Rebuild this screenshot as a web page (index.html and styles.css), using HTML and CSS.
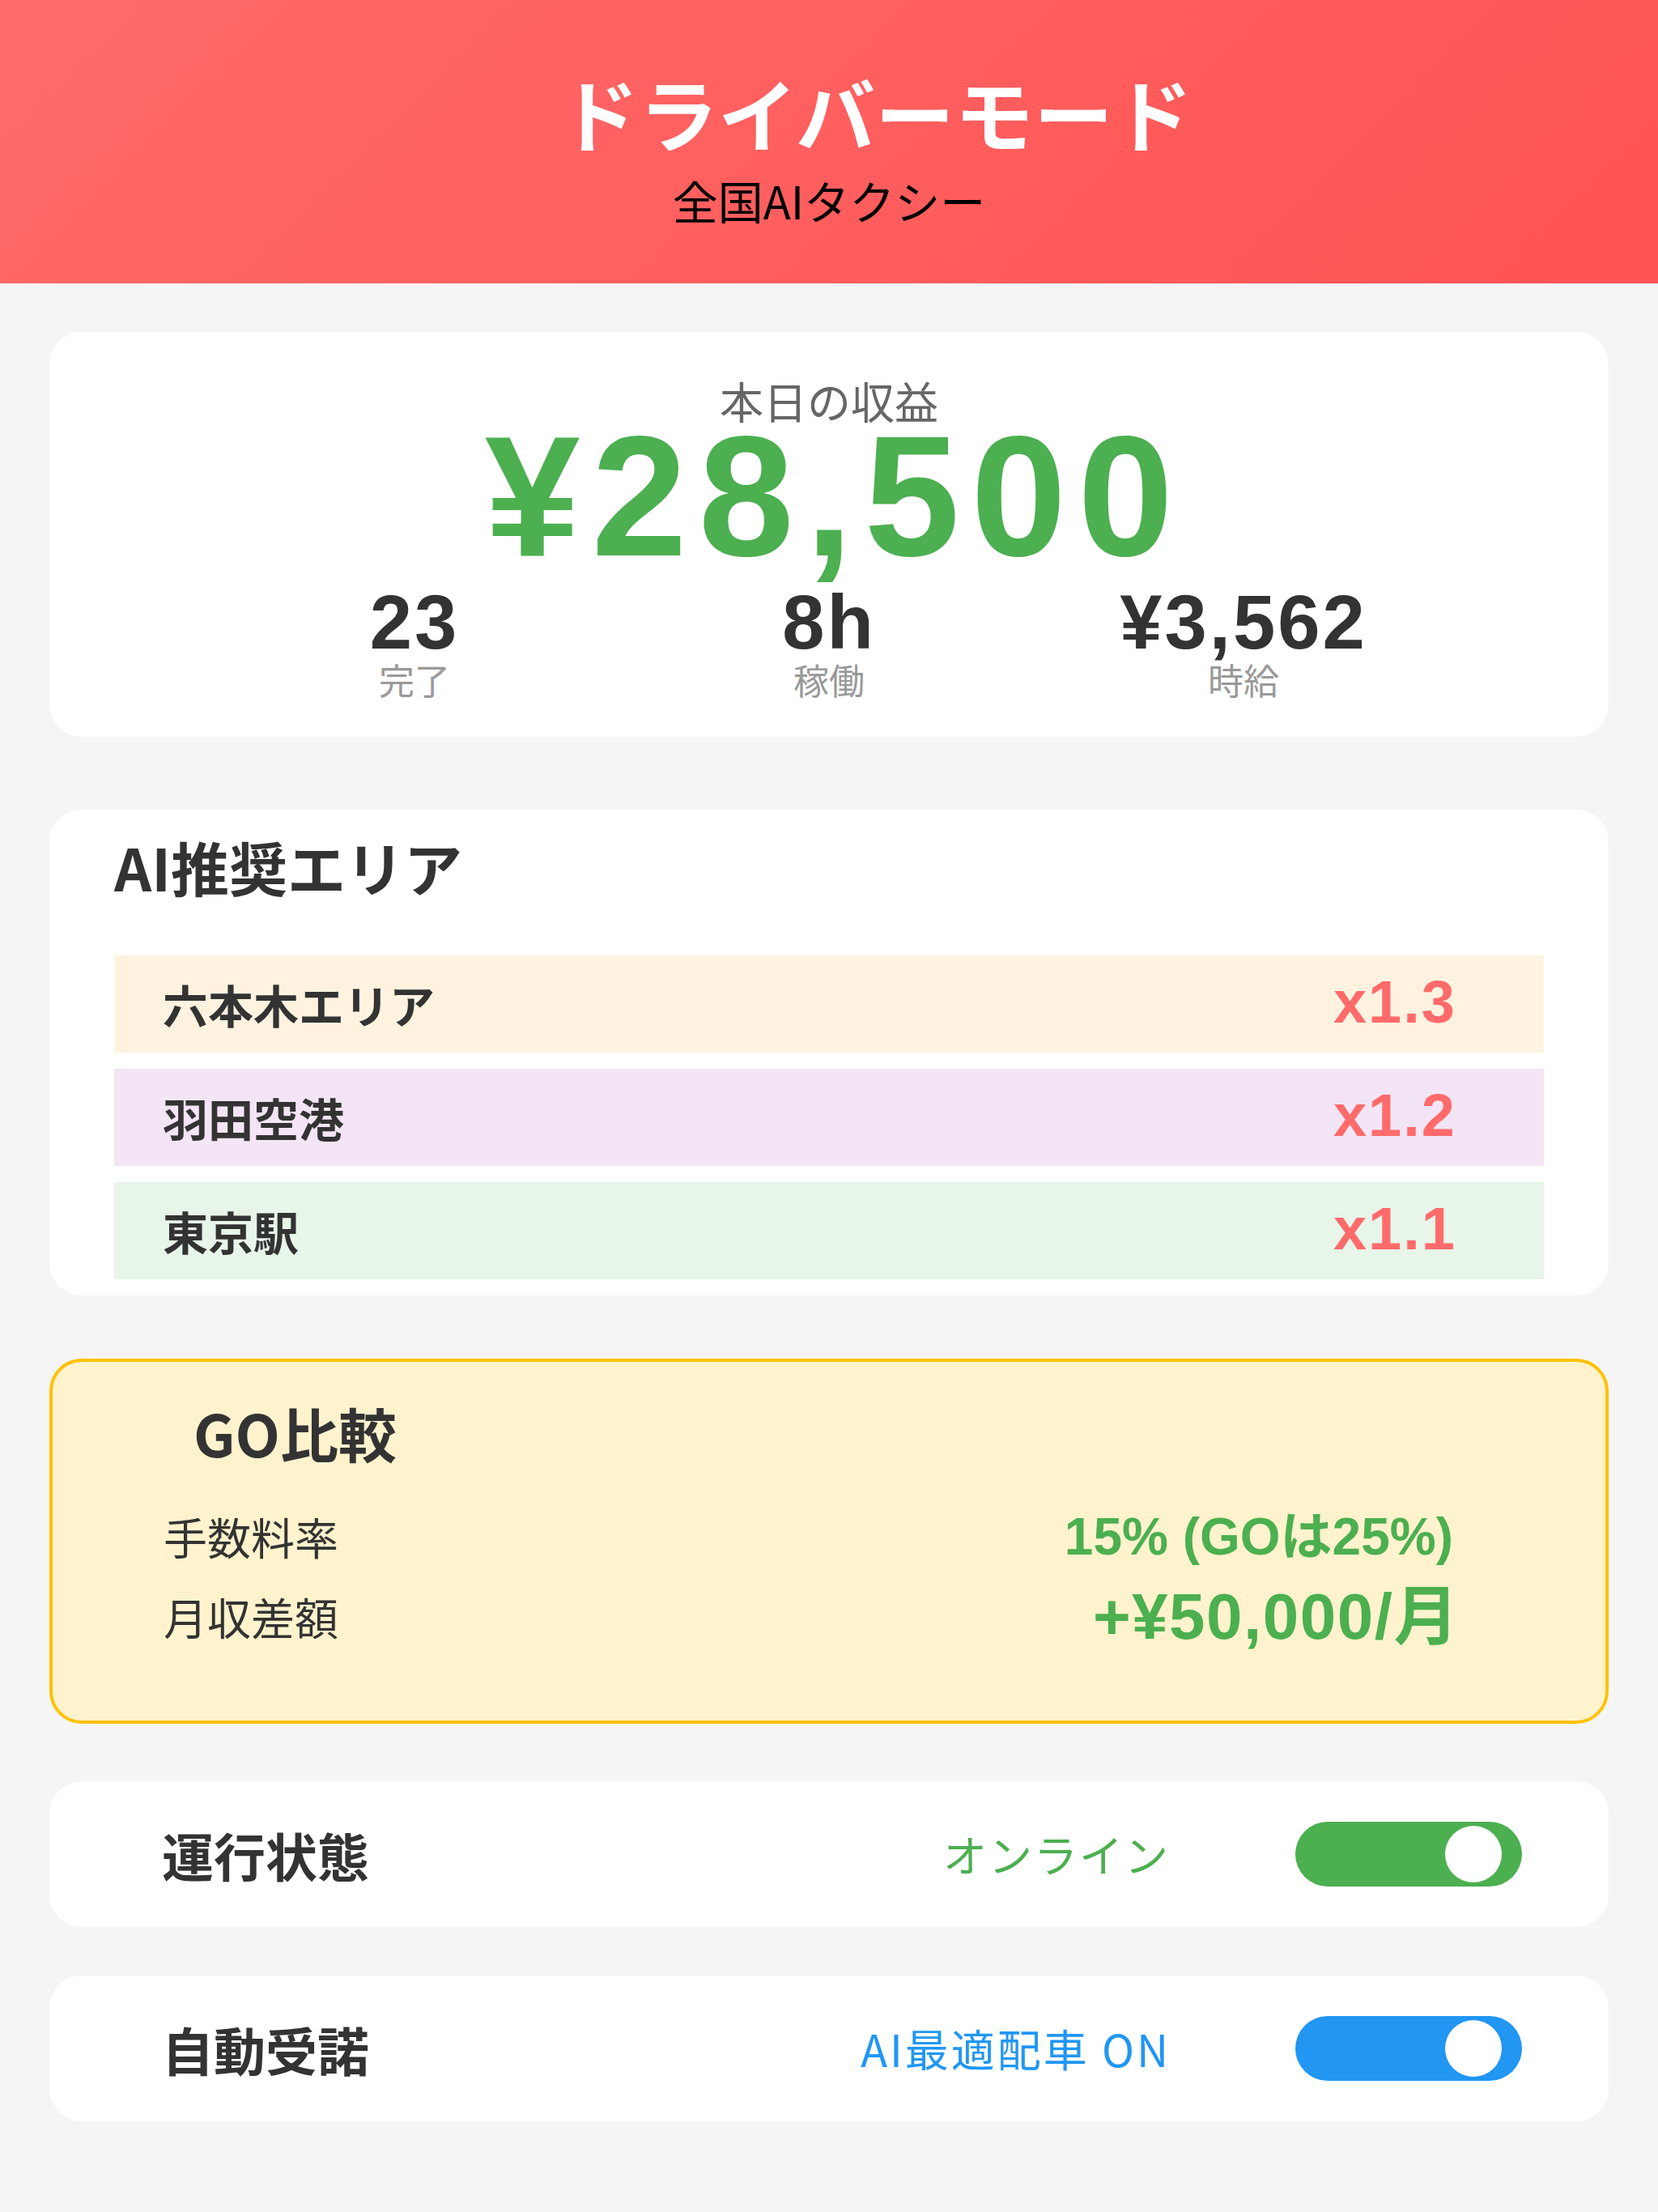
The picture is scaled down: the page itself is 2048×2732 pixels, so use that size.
FILE: index.html
```html
<!DOCTYPE html>
<html lang="ja">
<head>
<meta charset="utf-8">
<title>ドライバーモード</title>
<link rel="stylesheet" href="styles.css">
</head>
<body>
<header class="header">
  <h1 class="title">ドライバーモード</h1>
  <p class="subtitle">全国AIタクシー</p>
</header>
<main class="content">
  <section class="card earnings">
    <div class="earn-label">本日の収益</div>
    <div class="earn-amount num">¥28,500</div>
    <div class="stats">
      <div class="stat"><div class="stat-value num">23</div><div class="stat-label">完了</div></div>
      <div class="stat"><div class="stat-value num">8h</div><div class="stat-label">稼働</div></div>
      <div class="stat"><div class="stat-value num">¥3,562</div><div class="stat-label">時給</div></div>
    </div>
  </section>

  <section class="card areas">
    <h2 class="card-title">AI推奨エリア</h2>
    <div class="area-list">
      <div class="area area-orange"><span class="area-name">六本木エリア</span><span class="area-mult num">x1.3</span></div>
      <div class="area area-purple"><span class="area-name">羽田空港</span><span class="area-mult num">x1.2</span></div>
      <div class="area area-green"><span class="area-name">東京駅</span><span class="area-mult num">x1.1</span></div>
    </div>
  </section>

  <section class="card compare">
    <h2 class="card-title compare-title">GO比較</h2>
    <div class="cmp-row"><span class="cmp-label">手数料率</span><span class="cmp-value num">15% (GOは25%)</span></div>
    <div class="cmp-row"><span class="cmp-label">月収差額</span><span class="cmp-value cmp-big num">+¥50,000/月</span></div>
  </section>

  <section class="card toggle-card toggle-first">
    <span class="toggle-label">運行状態</span>
    <span class="toggle-status status-green">オンライン</span>
    <span class="switch switch-green"><span class="knob"></span></span>
  </section>

  <section class="card toggle-card">
    <span class="toggle-label">自動受諾</span>
    <span class="toggle-status status-blue">AI最適配車 ON</span>
    <span class="switch switch-blue"><span class="knob"></span></span>
  </section>
</main>
</body>
</html>
```
FILE: styles.css
```css
html {
  background: #f5f5f5;
}
body {
  margin: 0;
  min-height: 2732px;
  background: #f5f5f5;
  font-family: "Noto Sans CJK JP", "Noto Sans", sans-serif;
  color: #333;
}
.num {
  font-family: "Liberation Sans", "Noto Sans CJK JP", sans-serif;
}
.header {
  height: 350px;
  box-sizing: border-box;
  padding-top: 88px;
  text-align: center;
  background: linear-gradient(135deg, #ff6b6b 0%, #ff5252 100%);
}
.title {
  margin: 0;
  padding-left: 116px;
  font-size: 98px;
  line-height: 1;
  font-weight: 700;
  color: #fff;
}
.subtitle {
  margin: 33px 0 0;
  font-size: 56px;
  line-height: 1;
  color: #000;
}
.content {
  padding: 60px 61px;
}
.card {
  background: #fff;
  border-radius: 40px;
}
.earnings {
  padding: 58px 0 49px;
  margin-bottom: 90px;
  text-align: center;
}
.earn-label {
  font-size: 54px;
  line-height: 1;
  color: #666;
}
.earn-amount {
  padding-left: 14px;
  font-size: 212px;
  line-height: 0.854;
  font-weight: 700;
  letter-spacing: 14px;
  color: #4caf50;
}
.stats {
  display: grid;
  grid-template-columns: repeat(3, 512px);
  justify-content: center;
  margin-top: 19px;
}
.stat {
  text-align: center;
}
.stat-value {
  font-size: 94px;
  line-height: 1;
  font-weight: 700;
  letter-spacing: 3px;
  color: #333;
}
.stat-label {
  font-size: 44px;
  line-height: 1;
  color: #999;
  margin-top: 1px;
}
.areas {
  padding: 34px 80px 20px;
  margin-bottom: 78px;
}
.card-title {
  margin: 0 0 74px;
  font-size: 72px;
  line-height: 1;
  font-weight: 700;
  color: #333;
}
.area-list {
  display: flex;
  flex-direction: column;
  gap: 20px;
}
.area {
  height: 120px;
  display: flex;
  align-items: center;
  justify-content: space-between;
  padding: 0 108px 0 60px;
}
.area-orange { background: #fff3e0; }
.area-purple { background: #f3e5f5; }
.area-green { background: #e8f5e9; }
.area-name {
  font-size: 56px;
  line-height: 1;
  font-weight: 700;
  color: #333;
}
.area-mult {
  font-size: 74px;
  line-height: 1;
  font-weight: 700;
  letter-spacing: 2px;
  color: #ff6b6b;
  margin-bottom: 5px;
}
.compare {
  background: #fff3cd;
  border: 4px solid #ffc107;
  padding: 51px 80px 79px;
  margin-bottom: 71px;
}
.compare-title {
  padding-left: 94px;
  margin-bottom: 43px;
}
.cmp-row {
  height: 99px;
  display: flex;
  align-items: center;
  justify-content: space-between;
  padding: 0 108px 0 57px;
}
.cmp-label {
  font-size: 54px;
  line-height: 1;
  color: #333;
}
.cmp-value {
  font-size: 64px;
  line-height: 1;
  font-weight: 700;
  color: #4caf50;
}
.cmp-big {
  font-size: 80px;
  letter-spacing: 1.5px;
  margin-right: -8px;
}
.toggle-card {
  height: 180px;
  box-sizing: border-box;
  display: flex;
  align-items: center;
  padding: 0 107px 0 139px;
}
.toggle-first {
  margin-bottom: 60px;
}
.toggle-label {
  flex: 1;
  font-size: 64px;
  line-height: 1;
  font-weight: 700;
  color: #333;
}
.toggle-status {
  margin-right: 155px;
  font-size: 54px;
  line-height: 1;
}
.status-green {
  color: #4caf50;
  letter-spacing: 2px;
}
.status-blue {
  color: #2196f3;
  letter-spacing: 3px;
  margin-right: 154px;
}
.switch {
  position: relative;
  width: 280px;
  height: 80px;
  border-radius: 40px;
  flex: none;
}
.switch-green { background: #4caf50; }
.switch-blue { background: #2196f3; }
.knob {
  position: absolute;
  top: 5px;
  right: 25px;
  width: 70px;
  height: 70px;
  border-radius: 50%;
  background: #fff;
}
```
